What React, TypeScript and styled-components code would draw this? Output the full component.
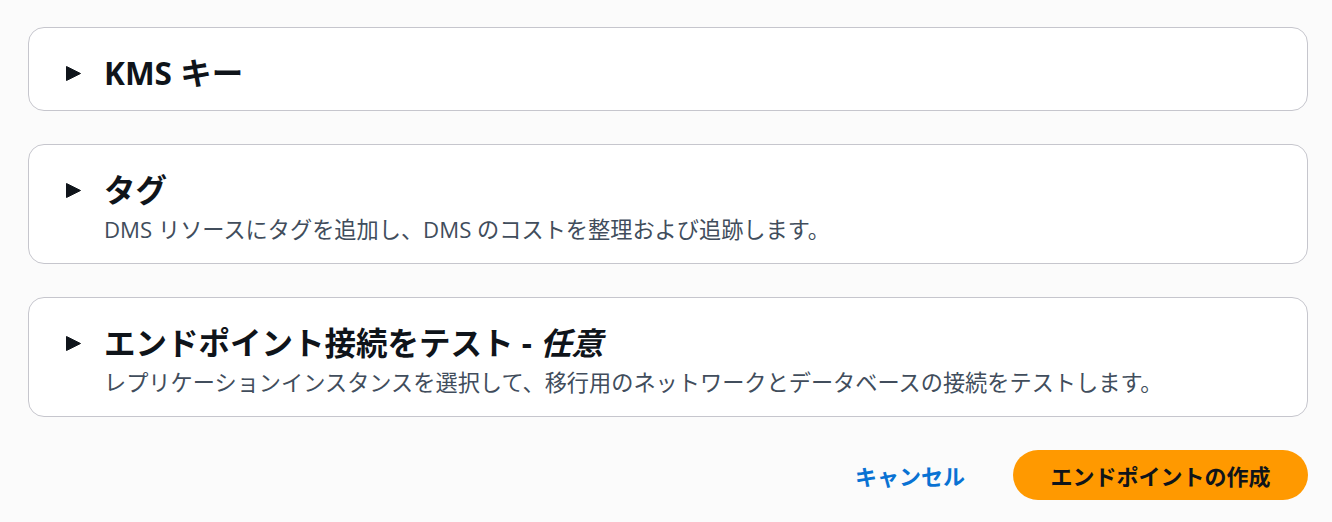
import React from 'react';
import styled, { createGlobalStyle } from 'styled-components';

const GlobalStyle = createGlobalStyle`
  body {
    margin: 0;
    background: #fbfbfb;
    font-family: "Open Sans", "Noto Sans CJK JP", sans-serif;
    color: #0f141a;
  }
`;

const Page = styled.div`
  padding: 27px 24px 0 28px;
  display: flex;
  flex-direction: column;
  gap: 33px;
`;

const Card = styled.section`
  width: 1280px;
  box-sizing: border-box;
  background: #ffffff;
  border: 1px solid #c6c6cd;
  border-radius: 16px;
  padding: 25px 38px 17px 36px;
`;

const Header = styled.div`
  display: flex;
  align-items: center;
  gap: 22px;
  height: 40px;
`;

const Caret = styled.svg`
  width: 17px;
  height: 17px;
  flex: none;
`;

const Title = styled.h2`
  margin: 0;
  font-size: 31.5px;
  font-weight: 700;
  line-height: 40px;
  color: #0f141a;
`;

const Optional = styled.i`
  font-style: italic;
`;

const Description = styled.p`
  margin: 4px 0 0 39px;
  font-size: 22.2px;
  line-height: 32px;
  color: #414d5c;
`;

const Actions = styled.div`
  width: 1280px;
  display: flex;
  justify-content: flex-end;
  align-items: center;
  gap: 48px;
`;

const LinkButton = styled.button`
  border: none;
  background: none;
  padding: 0;
  font: inherit;
  font-size: 22px;
  font-weight: 700;
  color: #0972d3;
  cursor: pointer;
`;

const PrimaryButton = styled.button`
  border: none;
  background: #ff9900;
  border-radius: 25px;
  height: 50px;
  width: 295px;
  font: inherit;
  font-size: 22px;
  font-weight: 700;
  color: #0f141a;
  cursor: pointer;
`;

const CaretIcon = () => (
  <Caret viewBox="0 0 17 17">
    <path d="M1.5 1.5 L15.5 8.5 L1.5 15.5 Z" fill="#0f141a" stroke="#0f141a" strokeWidth="1" strokeLinejoin="round" />
  </Caret>
);

const Section: React.FC<{ title: React.ReactNode; description?: string }> = ({ title, description }) => (
  <Card>
    <Header>
      <CaretIcon />
      <Title>{title}</Title>
    </Header>
    {description && <Description>{description}</Description>}
  </Card>
);

export default function App() {
  return (
    <>
      <GlobalStyle />
      <Page>
        <Section title="KMS キー" />
        <Section title="タグ" description="DMS リソースにタグを追加し、DMS のコストを整理および追跡します。" />
        <Section
          title={
            <>
              エンドポイント接続をテスト - <Optional>任意</Optional>
            </>
          }
          description="レプリケーションインスタンスを選択して、移行用のネットワークとデータベースの接続をテストします。"
        />
        <Actions>
          <LinkButton>キャンセル</LinkButton>
          <PrimaryButton>エンドポイントの作成</PrimaryButton>
        </Actions>
      </Page>
    </>
  );
}
